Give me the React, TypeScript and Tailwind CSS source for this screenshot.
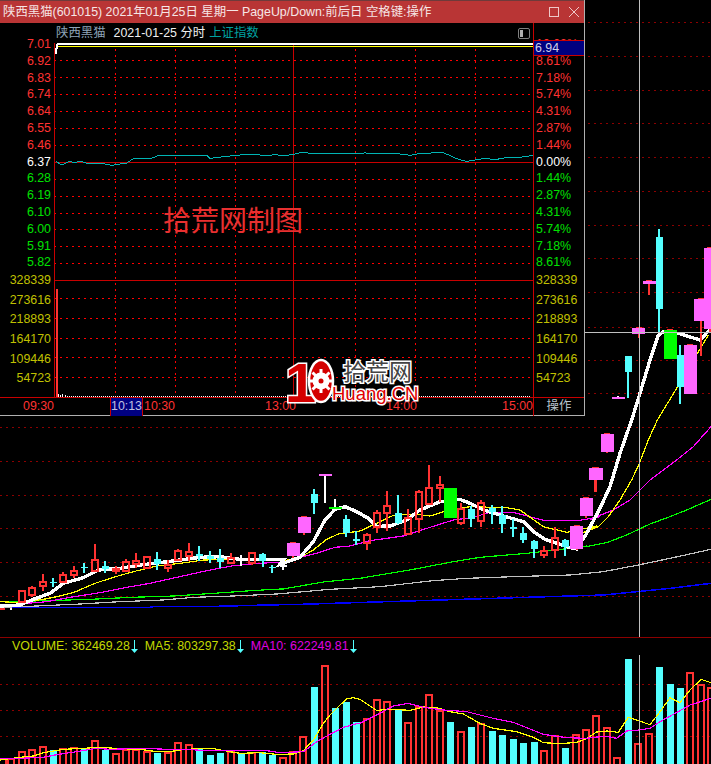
const RED = '#ff3232';
const CYAN = '#54ffff';
const PINK = '#ff66ff';

type Kind = 'r' | 'c' | 'm' | 'g' | 'w' | 'p' | 'q';
type Candle = [number, number, number, number, number, Kind];

// readings taken from crops at 3x: [x, bodyTop, bodyBottom, wickTop, wickBottom, kind]
function crop(list: Candle[], ox: number, oy: number) {
  return list.map(
    ([x, bt, bb, wt, wb, k]) => [ox + x / 3, oy + bt / 3, oy + bb / 3, oy + wt / 3, oy + wb / 3, k] as Candle,
  );
}

const candles: Candle[] = [
  ...crop(
    [
      [65, 274, 305, 274, 305, 'r'],
      [96, 264, 285, 258, 291, 'r'],
      [128, 245, 258, 222, 273, 'r'],
      [160, 245, 248, 235, 262, 'c'],
      [190, 226, 246, 216, 250, 'r'],
      [222, 212, 224, 198, 235, 'r'],
      [253, 200, 205, 189, 218, 'c'],
      [285, 179, 214, 132, 214, 'r'],
      [316, 197, 207, 183, 219, 'c'],
      [348, 207, 209, 198, 222, 'r'],
      [378, 187, 212, 178, 212, 'r'],
      [409, 184, 192, 159, 205, 'r'],
      [440, 172, 204, 172, 204, 'r'],
      [472, 178, 192, 156, 210, 'c'],
      [503, 195, 204, 180, 216, 'r'],
      [534, 152, 180, 148, 180, 'r'],
      [566, 157, 168, 129, 182, 'r'],
      [598, 162, 168, 138, 184, 'c'],
      [630, 168, 176, 153, 189, 'c'],
      [660, 175, 187, 147, 205, 'c'],
      [693, 175, 190, 160, 192, 'r'],
      [723, 180, 183, 165, 198, 'w'],
      [756, 158, 188, 155, 195, 'r'],
      [788, 163, 183, 158, 201, 'c'],
      [817, 200, 203, 195, 219, 'c'],
      [850, 196, 200, 188, 210, 'w'],
    ],
    0,
    500,
  ),
  ...crop(
    [
      [40, 279, 318, 276, 325, 'm'],
      [73, 201, 248, 198, 255, 'm'],
      [103, 132, 158, 117, 192, 'c'],
      [135, 72, 75, 72, 158, 'p'],
      [165, 171, 173, 147, 173, 'q'],
      [198, 207, 250, 196, 261, 'c'],
      [229, 267, 272, 243, 285, 'c'],
      [261, 256, 279, 250, 300, 'r'],
      [291, 188, 232, 180, 249, 'r'],
      [321, 169, 190, 123, 243, 'r'],
      [354, 190, 218, 135, 222, 'c'],
      [384, 205, 251, 178, 254, 'r'],
      [417, 127, 208, 120, 248, 'r'],
      [447, 115, 161, 45, 165, 'r'],
      [480, 104, 115, 78, 155, 'r'],
      [511, 114, 203, 114, 203, 'g'],
      [543, 177, 220, 159, 224, 'r'],
      [574, 177, 206, 168, 231, 'c'],
      [603, 158, 212, 151, 231, 'r'],
      [636, 175, 187, 165, 222, 'c'],
      [667, 195, 222, 168, 249, 'c'],
      [700, 232, 237, 207, 262, 'c'],
      [730, 250, 270, 232, 279, 'c'],
      [763, 273, 298, 270, 324, 'c'],
      [792, 304, 316, 289, 324, 'r'],
      [824, 263, 300, 230, 324, 'r'],
      [855, 271, 290, 268, 318, 'c'],
      [890, 228, 296, 225, 300, 'm'],
      [919, 144, 198, 141, 205, 'm'],
      [946, 55, 90, 52, 125, 'm'],
    ],
    280,
    450,
  ),
  ...crop(
    [
      [48, 234, 288, 231, 294, 'm'],
      [79, 144, 180, 141, 216, 'm'],
      [112, 42, 96, 39, 99, 'm'],
    ],
    570,
    420,
  ),
  ...crop(
    [
      [174, 531, 534, 528, 534, 'p'],
      [205, 408, 456, 408, 534, 'c'],
      [236, 324, 342, 321, 354, 'm'],
      [267, 183, 192, 180, 225, 'm'],
      [298, 51, 267, 27, 340, 'c'],
      [331, 330, 417, 327, 417, 'g'],
      [361, 405, 501, 375, 552, 'c'],
      [391, 375, 522, 372, 522, 'm'],
      [422, 237, 303, 234, 408, 'm'],
      [451, 84, 327, 81, 340, 'm'],
    ],
    560,
    220,
  ),
];

function pts(list: [number, number][], ox: number, oy: number) {
  return list.map(([x, y]) => `${ox + x / 3},${oy + y / 3}`).join(' ');
}

const maWhite =
  pts([[0, 318], [60, 315], [100, 298], [150, 280], [190, 250], [250, 233], [295, 210], [360, 205], [420, 195], [480, 188], [540, 180], [600, 172], [660, 170], [720, 178], [780, 178], [820, 178], [850, 180]], 0, 500) +
  ' ' +
  pts([[0, 343], [60, 322], [100, 275], [135, 210], [165, 178], [195, 170], [230, 185], [265, 205], [290, 229], [330, 228], [380, 210], [420, 180], [480, 155], [540, 148], [570, 160], [610, 180], [660, 195], [730, 215], [760, 245], [795, 268], [860, 290], [890, 297], [920, 250], [960, 175]], 280, 450) +
  ' ' +
  pts([[120, 200], [150, 100], [185, 0]], 570, 420) +
  ' ' +
  pts([[240, 520], [270, 420], [295, 345], [310, 335], [355, 340], [420, 360], [453, 325]], 560, 220);

const maYellow =
  pts([[0, 305], [60, 308], [130, 298], [170, 290], [220, 278], [285, 250], [340, 232], [400, 215], [470, 198], [540, 190], [610, 180], [700, 178], [830, 178]], 0, 500) +
  ' ' +
  pts([[0, 332], [50, 328], [100, 300], [140, 268], [175, 252], [240, 243], [290, 220], [340, 196], [400, 192], [450, 198], [500, 182], [570, 170], [680, 173], [720, 180], [790, 230], [860, 247], [950, 228]], 280, 450) +
  ' ' +
  pts([[40, 338], [85, 320], [115, 290], [150, 240], [185, 180], [208, 130], [235, 60], [262, 0]], 570, 420) +
  ' ' +
  pts([[350, 505], [445, 345]], 560, 220);

const maMagenta =
  pts([[60, 312], [140, 305], [210, 292], [300, 278], [380, 262], [450, 250], [530, 232], [620, 212], [700, 197], [780, 190], [860, 185]], 0, 500) +
  ' ' +
  pts([[0, 335], [60, 322], [110, 310], [165, 292], [210, 288], [270, 272], [370, 258], [450, 232], [520, 210], [580, 202], [630, 187], [700, 187], [790, 211], [900, 211], [960, 200]], 280, 450) +
  ' ' +
  pts([[60, 298], [130, 270], [180, 240], [240, 180], [320, 120], [370, 80], [423, 20]], 570, 420);

const maGreen =
  pts([[0, 305], [140, 302], [270, 298], [395, 292], [520, 288], [640, 280], [770, 271], [860, 266]], 0, 500) +
  ' ' +
  pts([[0, 418], [50, 410], [130, 396], [240, 385], [400, 358], [520, 335], [600, 322], [740, 310], [820, 301], [920, 288]], 280, 450) +
  ' ' +
  pts([[0, 386], [60, 378], [110, 368], [170, 345], [240, 312], [300, 290], [350, 270], [423, 238]], 570, 420);

const maGray =
  pts([[0, 322], [110, 318], [240, 312], [360, 305], [490, 300], [580, 292], [700, 288], [830, 282]], 0, 500) +
  ' ' +
  pts([[150, 418], [300, 410], [460, 392], [560, 385], [700, 380], [870, 375]], 280, 450) +
  ' ' +
  pts([[0, 465], [100, 455], [200, 436], [300, 415], [423, 388]], 570, 420);

const maBlue =
  pts([[0, 322], [450, 322], [460, 320], [610, 320], [800, 315], [900, 313]], 0, 500) +
  ' ' +
  pts([[0, 528], [100, 525], [200, 515], [300, 505], [423, 490]], 570, 420);

const gridY = [22, 56, 90, 123, 157, 191, 225, 258, 292, 327, 360, 393, 427, 461, 495, 528, 562, 596];

function CandleMark({ c }: { c: Candle }) {
  const [x, bt, bb, wt, wb, k] = c;
  if (k === 'r') {
    return (
      <g stroke={RED} strokeWidth={2} fill="none">
        <line x1={x} x2={x} y1={wt} y2={bt} />
        <line x1={x} x2={x} y1={bb} y2={wb} />
        <rect x={x - 3} y={bt} width={6} height={Math.max(bb - bt, 2)} />
      </g>
    );
  }
  if (k === 'c' || k === 'w') {
    const color = k === 'c' ? CYAN : '#ffffff';
    return (
      <g>
        <rect x={x - 1} y={wt} width={2} height={wb - wt} fill={color} />
        <rect x={x - 3.5} y={bt} width={7} height={bb - bt} fill={color} />
      </g>
    );
  }
  if (k === 'p' || k === 'q') {
    return (
      <g>
        <rect x={x - 1} y={wt} width={2} height={wb - wt} fill="#ffffff" />
        <rect x={x - 6.5} y={bt} width={13} height={1.5} fill={k === 'p' ? PINK : '#00ff00'} />
      </g>
    );
  }
  const fill = k === 'm' ? PINK : '#00ff00';
  return (
    <g>
      <rect x={x - 1} y={wt} width={2} height={wb - wt} fill={RED} />
      <rect x={x - 3} y={wt} width={6} height={1} fill={RED} />
      <rect x={x - 6.5} y={bt} width={13} height={bb - bt} fill={fill} />
    </g>
  );
}

function MainChart() {
  return (
    <svg className="block" width="711" height="637" viewBox="0 0 711 637" shapeRendering="crispEdges">
      {gridY.map((y) => (
        <line key={y} x1="0" x2="711" y1={y + 0.5} y2={y + 0.5} stroke="#8c0000" strokeDasharray="2 4" />
      ))}
      <g fill="none">
        <polyline points={maBlue} stroke="#0000ff" strokeWidth="1.5" />
        <polyline points={maGray} stroke="#c0c0c0" strokeWidth="1.2" />
        <polyline points={maGreen} stroke="#00ff00" strokeWidth="1.2" />
        <polyline points={maMagenta} stroke="#ff00ff" strokeWidth="1.2" />
        <polyline points={maYellow} stroke="#ffff00" strokeWidth="1.2" />
        <polyline points={maWhite} stroke="#ffffff" strokeWidth="3.4" />
      </g>
      {candles.map((c, i) => (
        <CandleMark key={i} c={c} />
      ))}
      <rect x="0" y="608" width="5" height="2" fill={RED} />
      <rect x="10" y="608" width="2" height="2" fill="#ffffff" />
      <line x1="639.5" x2="639.5" y1="0" y2="637" stroke="#c0c0c0" />
      <line x1="585" x2="711" y1="332.5" y2="332.5" stroke="#c0c0c0" />
    </svg>
  );
}

// [x at 3x, top at 3x, cyan?] for the two crops of the volume panel
const barsLeft: [number, number, boolean][] = [
  [32, 385, false], [65, 362, false], [96, 358, false], [128, 348, false], [160, 360, true], [190, 355, false],
  [222, 352, false], [253, 358, true], [285, 330, false], [316, 360, true], [348, 368, false], [378, 358, false],
  [409, 358, false], [440, 362, false], [472, 368, true], [503, 365, false], [534, 335, false], [566, 342, false],
  [598, 358, true], [630, 375, true], [662, 369, true], [693, 364, false], [725, 370, true], [756, 365, false],
  [788, 367, true], [818, 375, true], [848, 380, false], [880, 362, false], [910, 317, false], [943, 170, true],
  [975, 104, false], [1007, 233, true], [1039, 215, true], [1070, 275, true],
];
const barsRight: [number, number, boolean][] = [
  [20, 263, false], [51, 206, false], [82, 212, false], [115, 240, true], [144, 275, false], [176, 228, false],
  [207, 191, false], [239, 241, false], [271, 276, true], [302, 302, false], [334, 291, true], [363, 278, false],
  [397, 303, true], [428, 315, true], [460, 327, true], [490, 339, true], [522, 336, true], [551, 360, false],
  [584, 314, false], [616, 354, true], [647, 312, false], [678, 296, false], [708, 254, false], [740, 290, false],
  [771, 380, false], [806, 87, true], [834, 338, false], [867, 308, false], [898, 111, true], [931, 162, true],
  [961, 174, true], [990, 125, false], [1022, 161, false], [1053, 170, false],
];

const volYellow =
  pts([[0, 390], [60, 382], [100, 378], [130, 368], [190, 358], [250, 355], [300, 352], [360, 356], [420, 358], [470, 365], [510, 365], [540, 360], [590, 356], [640, 356], [690, 365], [720, 370], [780, 368], [830, 373], [880, 372], [910, 362], [940, 330], [970, 280], [990, 255], [1020, 225], [1040, 207], [1060, 203]], 0, 630) +
  ' ' +
  pts([[0, 208], [30, 228], [50, 241], [90, 238], [150, 241], [190, 231], [230, 233], [270, 245], [310, 252], [360, 280], [400, 295], [470, 305], [520, 322], [550, 338], [600, 341], [650, 337], [680, 326], [710, 306], [740, 303], [775, 307], [805, 262], [870, 284], [900, 245], [930, 203], [960, 218], [990, 180], [1023, 148], [1053, 158]], 360, 630);

const volMagenta =
  pts([[0, 385], [60, 385], [130, 382], [170, 374], [230, 365], [290, 355], [330, 358], [430, 355], [500, 358], [560, 358], [620, 362], [800, 362], [840, 368], [910, 365], [950, 335], [990, 313], [1030, 292], [1070, 281]], 0, 630) +
  ' ' +
  pts([[0, 280], [50, 255], [100, 228], [145, 220], [190, 232], [250, 240], [320, 245], [400, 265], [460, 277], [550, 313], [620, 323], [680, 325], [700, 322], [740, 319], [770, 325], [800, 303], [830, 301], [870, 295], [900, 275], [960, 242], [990, 225], [1053, 205]], 360, 630);

function VolumeBar({ x, y, cyan }: { x: number; y: number; cyan: boolean }) {
  if (cyan) return <rect x={x - 3.5} y={y} width={7} height={764 - y} fill={CYAN} />;
  return <rect x={x - 3} y={y + 1} width={6} height={764 - y} fill="none" stroke={RED} strokeWidth={2} />;
}

function VolumeChart() {
  return (
    <svg className="block" width="711" height="109" viewBox="0 655 711 109" shapeRendering="crispEdges">
      {[684, 710, 736].map((y) => (
        <line key={y} x1="0" x2="711" y1={y + 0.5} y2={y + 0.5} stroke="#8c0000" strokeDasharray="2 4" />
      ))}
      <rect x="-1" y="759" width="7" height="6" fill="none" stroke={RED} strokeWidth={2} />
      {barsLeft.map(([x, y, c]) => (
        <VolumeBar key={x} x={x / 3} y={630 + y / 3} cyan={c} />
      ))}
      {barsRight.map(([x, y, c]) => (
        <VolumeBar key={x} x={360 + x / 3} y={630 + y / 3} cyan={c} />
      ))}
      <polyline points={volYellow} fill="none" stroke="#ffff00" strokeWidth="1.2" />
      <polyline points={volMagenta} fill="none" stroke="#ff00ff" strokeWidth="1.2" />
      <line x1="639.5" x2="639.5" y1="655" y2="764" stroke="#c0c0c0" />
    </svg>
  );
}

function DownArrow() {
  return (
    <svg width="7" height="14" viewBox="0 0 7 14" className="shrink-0">
      <rect x="3" y="0" width="1" height="10" fill={CYAN} />
      <path d="M0 9h7l-3.5 4z" fill={CYAN} />
    </svg>
  );
}

const priceRows: [string, string, string][] = [
  ['7.01', '10.03%', RED],
  ['6.92', '8.61%', RED],
  ['6.83', '7.18%', RED],
  ['6.74', '5.74%', RED],
  ['6.64', '4.31%', RED],
  ['6.55', '2.87%', RED],
  ['6.46', '1.44%', RED],
  ['6.37', '0.00%', '#ffffff'],
  ['6.28', '1.44%', '#00e000'],
  ['6.19', '2.87%', '#00e000'],
  ['6.10', '4.31%', '#00e000'],
  ['6.00', '5.74%', '#00e000'],
  ['5.91', '7.18%', '#00e000'],
  ['5.82', '8.61%', '#00e000'],
];
const volRows = ['328339', '273616', '218893', '164170', '109446', '54723'];

const priceLine =
  pts([[168, 484], [185, 495], [205, 485], [225, 487], [245, 484], [260, 490], [310, 491], [335, 496], [380, 489], [400, 476], [455, 475], [475, 466], [520, 468], [620, 466], [630, 475], [690, 468], [740, 463], [800, 466], [830, 464], [845, 468], [880, 463], [900, 458]], 0, 0) +
  ' 330,154 365,153 ' +
  pts([[0, 462], [30, 466], [60, 460], [130, 458], [175, 478], [200, 484], [250, 476], [290, 478], [330, 471], [360, 472], [400, 466]], 400, 0);

function PopupChart() {
  const vertical = [115.5, 175.5, 235.5, 355.5, 415.5, 475.5];
  const horizontal = [60.5, 77.5, 94.5, 111.5, 128.5, 145.5, 179.5, 196.5, 213.5, 229.5, 246.5, 263.5, 298.5, 318.5, 338.5, 357.5, 377.5];
  return (
    <svg className="block" width="479" height="354" viewBox="54 43 479 354" shapeRendering="crispEdges">
      {horizontal.map((y) => (
        <line key={y} x1="54" x2="533" y1={y} y2={y} stroke="#ff0000" strokeDasharray="2 4" />
      ))}
      {vertical.map((x) => (
        <line key={x} x1={x} x2={x} y1="43" y2="397" stroke="#ff0000" strokeDasharray="2 4" />
      ))}
      <line x1="293.5" x2="293.5" y1="43" y2="397" stroke="#c80000" />
      <line x1="54" x2="533" y1="162.5" y2="162.5" stroke="#c80000" />
      <line x1="54" x2="533" y1="280.5" y2="280.5" stroke="#c80000" />
      <line x1="54.5" x2="54.5" y1="43" y2="397" stroke="#c80000" />
      <rect x="57" y="43" width="476" height="2" fill="#ffffff" />
      <rect x="57" y="45.5" width="476" height="1" fill="#ffff00" />
      <rect x="55" y="48" width="1.5" height="6" fill="#ffffff" />
      <rect x="56" y="44" width="1.5" height="5" fill="#ffffff" />
      <polyline points={priceLine} fill="none" stroke="#00b4b4" strokeWidth="1" />
      <rect x="56" y="289" width="1.5" height="108" fill={RED} />
      <rect x="58" y="394" width="1" height="3" fill="#ffffff" />
      <rect x="60" y="395" width="1" height="2" fill="#ffffff" />
      <rect x="62" y="394" width="1" height="3" fill="#ffffff" />
      <rect x="65" y="395" width="1" height="2" fill="#ffffff" />
      <line x1="67" x2="530" y1="396.5" y2="396.5" stroke="#ffffff" strokeDasharray="1 1" />
    </svg>
  );
}

function Logo() {
  const teeth = [0, 45, 90, 135, 180, 225, 270, 315];
  return (
    <div className="absolute left-[284px] top-[354px] h-[52px] w-[140px]">
      <svg className="overflow-visible" width="140" height="52" viewBox="0 0 140 52">
        <text x="1" y="48" fontFamily="Liberation Sans" fontWeight="700" fontSize="56" fill="#d40000" stroke="#ffffff" strokeWidth="3" paintOrder="stroke">
          1
        </text>
        <g transform="translate(37 27)">
          <ellipse cx="0" cy="0" rx="12" ry="21" fill="#d40000" stroke="#ffffff" strokeWidth="2.5" />
          <circle cx="0" cy="0" r="8.5" fill="#ffffff" />
          {teeth.map((a) => (
            <rect key={a} x="-1.5" y="-12" width="3" height="5" fill="#ffffff" transform={`rotate(${a})`} />
          ))}
          <circle cx="0" cy="0" r="2.5" fill="#d40000" />
        </g>
        <text x="59" y="26" fontFamily="Noto Sans CJK SC" fontSize="23" fill="#444444" stroke="#ffffff" strokeWidth="3" paintOrder="stroke">
          拾荒网
        </text>
        <text x="48" y="46" fontFamily="Liberation Sans" fontSize="18.5" fill="#e00000" stroke="#ffffff" strokeWidth="3" paintOrder="stroke">
          Huang.CN
        </text>
      </svg>
    </div>
  );
}

function Popup() {
  return (
    <div className="absolute left-0 top-0 flex h-[416px] w-[585px] flex-col border-r border-b border-[#b0b0b0] bg-black">
      <div className="flex h-[23px] shrink-0 items-center justify-between border-t border-[#6e3a3a] bg-[#b93535] pl-[3px] pr-[5px] text-[12.4px] text-[#f6e6e6]">
        <span className="whitespace-nowrap">陕西黑猫(601015) 2021年01月25日 星期一 PageUp/Down:前后日 空格键:操作</span>
        <span className="flex items-center gap-[10px]">
          <svg width="10" height="10" viewBox="0 0 10 10">
            <rect x="0.5" y="0.5" width="9" height="9" fill="none" stroke="#eec8c8" />
          </svg>
          <svg width="10" height="10" viewBox="0 0 10 10">
            <path d="M0 0l10 10M10 0L0 10" stroke="#eec8c8" />
          </svg>
        </span>
      </div>
      <div className="flex">
        <div className="flex w-[54px] flex-col items-end pr-[3px] pt-[13px] text-[12.4px]">
          {priceRows.map(([p, , color]) => (
            <div key={p} className="h-[16.8px] leading-[16.8px]" style={{ color }}>
              {p}
            </div>
          ))}
          <div>
            {volRows.map((v) => (
              <div key={v} className="h-[19.6px] text-right leading-[19.6px] text-[#c0c000]">
                {v}
              </div>
            ))}
          </div>
        </div>
        <div className="w-[480px] border-r border-[#c80000]">
          <div className="flex h-[20px] items-center pl-[2px] pr-[3px] text-[12.4px]">
            <span className="text-[#8ea4b8]">陕西黑猫</span>
            <span className="ml-[8px] text-[#f0f0f0]">2021-01-25 分时</span>
            <span className="ml-[4px] text-[#00a0a0]">上证指数</span>
            <svg className="ml-auto" width="12" height="11" viewBox="0 0 12 11">
              <rect x="0.5" y="0.5" width="11" height="10" rx="1.5" fill="none" stroke="#808080" />
              <rect x="2" y="2" width="3" height="7" fill="#b0b0b0" />
            </svg>
          </div>
          <PopupChart />
        </div>
        <div className="relative flex-1 pl-[2px] pt-[13px] text-[12.4px]">
          {priceRows.map(([p, pct, color]) => (
            <div key={p} className="h-[16.8px] leading-[16.8px]" style={{ color }}>
              {pct}
            </div>
          ))}
          {volRows.map((v) => (
            <div key={v} className="h-[19.6px] leading-[19.6px] text-[#c0c000]">
              {v}
            </div>
          ))}
          <div className="absolute left-0 right-0 top-[17px] flex h-[16px] items-center border-y border-[#c80000] bg-[#000080] pl-[1px] text-[#d0d0e8]">
            6.94
          </div>
        </div>
      </div>
      <div className="flex h-[19px] items-center border-t border-[#c80000] pb-[2px] text-[12.4px] text-[#ff3232]">
        <span className="ml-[23px] w-[87px]">09:30</span>
        <span className="-mb-[2px] flex h-[18px] w-[33px] items-center justify-center border-x border-[#c80000] bg-[#000080] pb-[2px] text-[#c0c0e0]">10:13</span>
        <span className="ml-[1px] w-[121px]">10:30</span>
        <span className="w-[121px]">13:00</span>
        <span className="w-[116px]">14:00</span>
        <span className="w-[31px]">15:00</span>
        <span className="-mb-[2px] flex h-[18px] flex-1 items-center justify-center border-l border-[#c80000] pb-[2px] text-[#b8c4cc]">操作</span>
      </div>
      <div className="absolute left-[163px] top-[206px] whitespace-nowrap text-[28px] leading-[32px] text-[#e83030]">拾荒网制图</div>
      <Logo />
    </div>
  );
}

export default function App() {
  return (
    <div className="relative h-[764px] w-[711px] overflow-hidden bg-black font-['Liberation_Sans','Noto_Sans_CJK_SC',sans-serif]">
      <MainChart />
      <Popup />
      <div className="flex h-[18px] items-center border-t border-[#8c0000] pl-[12px] text-[12.4px]">
        <span className="text-[#c4d800]">VOLUME: 362469.28</span>
        <span className="ml-[1px]"><DownArrow /></span>
        <span className="ml-[7px] text-[#c4d800]">MA5: 803297.38</span>
        <span className="ml-[1px]"><DownArrow /></span>
        <span className="ml-[7px] text-[#e000e0]">MA10: 622249.81</span>
        <span className="ml-[1px]"><DownArrow /></span>
      </div>
      <VolumeChart />
    </div>
  );
}
